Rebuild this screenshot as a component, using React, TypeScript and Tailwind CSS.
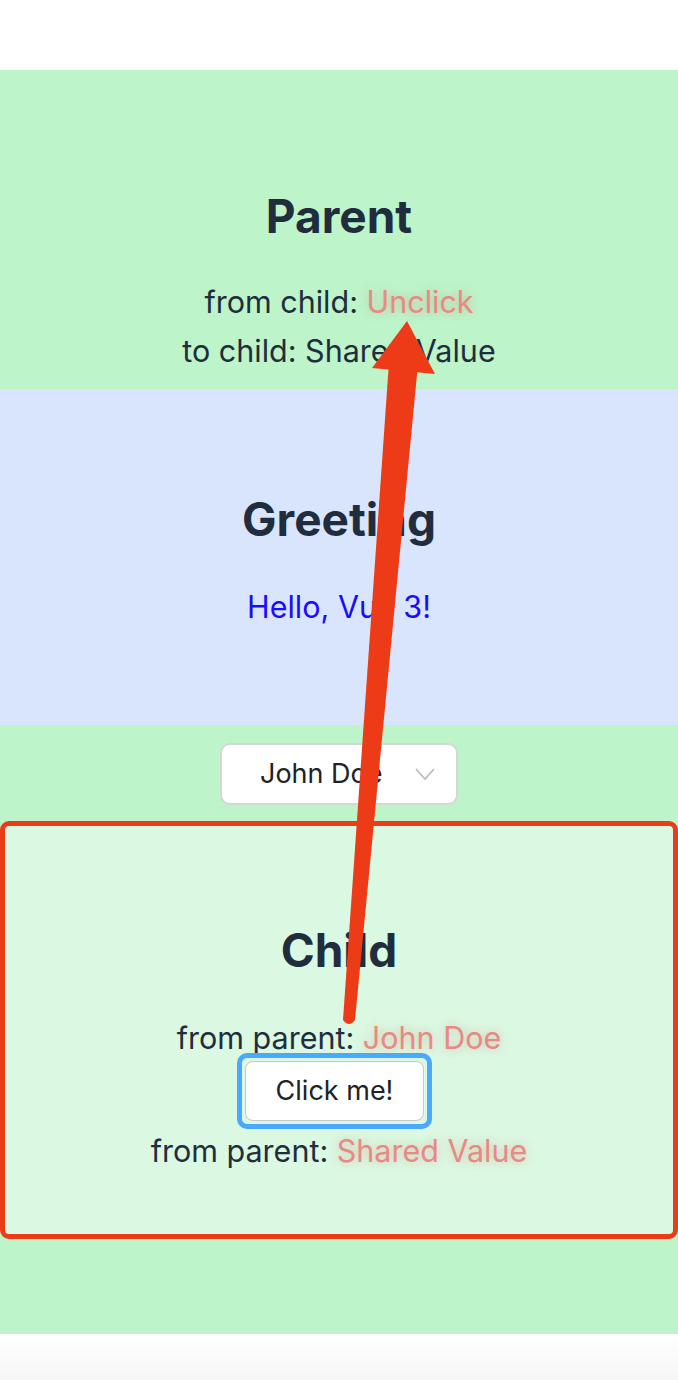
import React from 'react';

const glow = '[text-shadow:0_0_10px_rgba(214,120,110,0.45)]';

const App = () => {
    return (
        <div className="relative min-h-[1380px] bg-white font-['Inter','Noto_Sans',sans-serif] text-[#1f2d3d]">
            <div className="h-[70px]" />
            <div className="bg-[#bdf4ca]">
                {/* Parent */}
                <section className="flex flex-col items-center pt-[118px] pb-[14px]">
                    <h1 className="text-[46px] leading-[56px] font-bold">Parent</h1>
                    <div className="mt-[33px] text-[30.5px] leading-[49px] text-center">
                        <p>
                            from child: <span className={`text-[#e88a84] ${glow}`}>Unclick</span>
                        </p>
                        <p>to child: Shared Value</p>
                    </div>
                </section>

                {/* Greeting */}
                <section className="flex flex-col items-center bg-[#d9e5fc] pt-[102px] pb-[94px]">
                    <h2 className="text-[46px] leading-[56px] font-bold">Greeting</h2>
                    <p className="mt-[35px] text-[30.5px] leading-[49px] text-[#1a0dff]">Hello, Vue 3!</p>
                </section>

                <div className="flex justify-center pt-[18px] pb-[16px]">
                    <div className="flex h-[62px] w-[238px] items-center justify-between rounded-[10px] border-2 border-[#d6d6d6] bg-white pl-[38px] pr-[20px]">
                        <span className="text-[27px] text-[#222]">John Doe</span>
                        <svg width="22" height="14" viewBox="0 0 22 14" fill="none">
                            <path d="M2 2 L11 12 L20 2" stroke="#b9b9b9" strokeWidth="1.6" />
                        </svg>
                    </div>
                </div>

                {/* Child */}
                <section className="flex flex-col items-center rounded-[9px] border-[5px] border-[#ee3b17] bg-[#dbf8e2] pt-[96px] pb-[65px]">
                    <h2 className="text-[46px] leading-[56px] font-bold">Child</h2>
                    <p className="mt-[42px] text-[30.5px] leading-[36px]">
                        from parent: <span className={`text-[#e88a84] ${glow}`}>John Doe</span>
                    </p>
                    <div className="mr-[9px] -mt-[3px] rounded-[10px] border-[5px] border-[#4aa8ff] p-[3px]">
                        <button className="h-[60px] w-[179px] rounded-[8px] border border-[#c8c8c8] bg-white text-[27px] text-[#222]">
                            Click me!
                        </button>
                    </div>
                    <p className="mt-[4px] text-[30.5px] leading-[36px]">
                        from parent: <span className={`text-[#e88a84] ${glow}`}>Shared Value</span>
                    </p>
                </section>

                <div className="h-[95px]" />
            </div>
            <div className="h-[46px] bg-gradient-to-b from-white to-[#f6f6f6]" />

            {/* annotation arrow */}
            <svg
                className="pointer-events-none absolute left-0 top-0"
                width="678"
                height="1380"
                viewBox="0 0 678 1380"
            >
                <path
                    d="M389 362 L418 364 L355 1020 Q349 1028 343 1020 Z"
                    fill="#ee3b17"
                />
                <path d="M407 321 L372 368 L435 374 Z" fill="#ee3b17" />
            </svg>
        </div>
    );
};

export default App;
